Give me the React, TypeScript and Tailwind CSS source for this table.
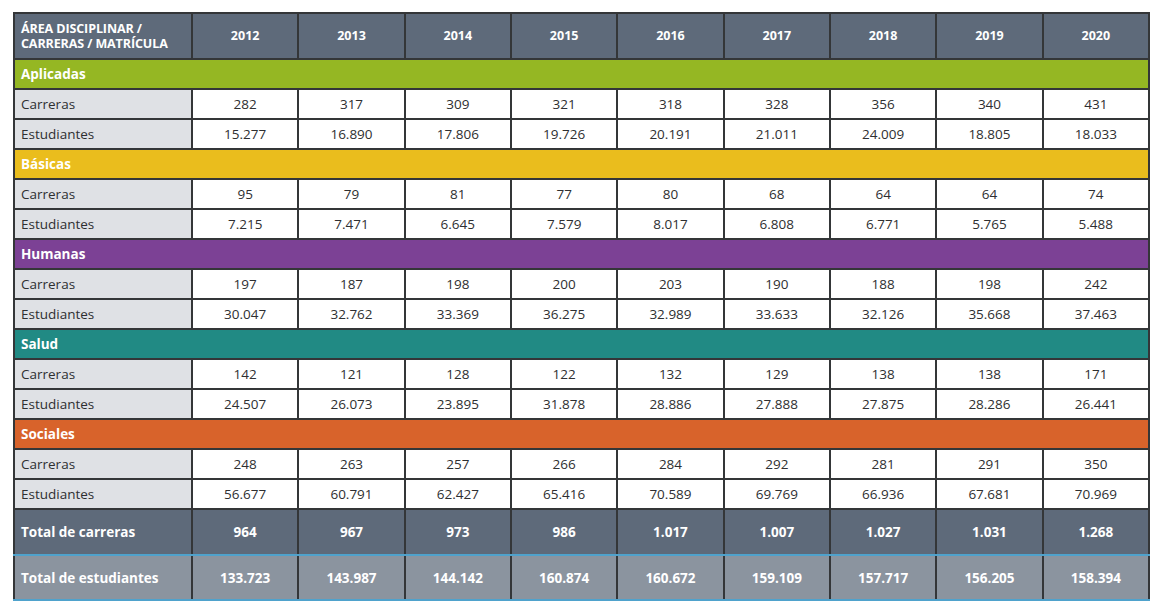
import React from 'react'

const years = ['2012', '2013', '2014', '2015', '2016', '2017', '2018', '2019', '2020']

const areas = [
    {
        name: 'Aplicadas',
        color: 'bg-[#95b723]',
        carreras: ['282', '317', '309', '321', '318', '328', '356', '340', '431'],
        estudiantes: ['15.277', '16.890', '17.806', '19.726', '20.191', '21.011', '24.009', '18.805', '18.033'],
    },
    {
        name: 'Básicas',
        color: 'bg-[#eabd1d]',
        carreras: ['95', '79', '81', '77', '80', '68', '64', '64', '74'],
        estudiantes: ['7.215', '7.471', '6.645', '7.579', '8.017', '6.808', '6.771', '5.765', '5.488'],
    },
    {
        name: 'Humanas',
        color: 'bg-[#7c4195]',
        carreras: ['197', '187', '198', '200', '203', '190', '188', '198', '242'],
        estudiantes: ['30.047', '32.762', '33.369', '36.275', '32.989', '33.633', '32.126', '35.668', '37.463'],
    },
    {
        name: 'Salud',
        color: 'bg-[#218a84]',
        carreras: ['142', '121', '128', '122', '132', '129', '138', '138', '171'],
        estudiantes: ['24.507', '26.073', '23.895', '31.878', '28.886', '27.888', '27.875', '28.286', '26.441'],
    },
    {
        name: 'Sociales',
        color: 'bg-[#d8632b]',
        carreras: ['248', '263', '257', '266', '284', '292', '281', '291', '350'],
        estudiantes: ['56.677', '60.791', '62.427', '65.416', '70.589', '69.769', '66.936', '67.681', '70.969'],
    },
]

const totalCarreras = ['964', '967', '973', '986', '1.017', '1.007', '1.027', '1.031', '1.268']
const totalEstudiantes = ['133.723', '143.987', '144.142', '160.874', '160.672', '159.109', '157.717', '156.205', '158.394']

const cell = 'border-2 border-[#343638]'

function DataRow({ label, values }: { label: string; values: string[] }) {
    return (
        <tr className="h-[30px]">
            <td className={`${cell} bg-[#dfe1e5] pl-[6px] text-left`}>{label}</td>
            {values.map((v, i) => (
                <td key={i} className={`${cell} bg-white text-center`}>{v}</td>
            ))}
        </tr>
    )
}

export default function App() {
    return (
        <div className="min-h-screen w-[1165px] bg-white pt-[12px] pl-[13px]" style={{ fontFamily: '"Open Sans", "Noto Sans", sans-serif' }}>
            <table className="w-[1137px] table-fixed border-collapse text-[13.5px] leading-[18px] text-[#2e2f31]">
                <colgroup>
                    <col className="w-[178px]" />
                    {years.map((y) => (
                        <col key={y} />
                    ))}
                </colgroup>
                <thead>
                    <tr className="h-[46px] bg-[#5e6a7a] text-white">
                        <th className={`${cell} pl-[6px] text-left text-[12.5px] font-bold leading-[15px] tracking-[-0.1px] whitespace-nowrap`}>
                            ÁREA DISCIPLINAR /<br />CARRERAS / MATRÍCULA
                        </th>
                        {years.map((y) => (
                            <th key={y} className={`${cell} text-center text-[12.5px] font-bold`}>{y}</th>
                        ))}
                    </tr>
                </thead>
                <tbody>
                    {areas.map((a) => (
                        <React.Fragment key={a.name}>
                            <tr className={`h-[30px] ${a.color}`}>
                                <td colSpan={10} className={`${cell} pl-[6px] text-left font-bold text-white`}>{a.name}</td>
                            </tr>
                            <DataRow label="Carreras" values={a.carreras} />
                            <DataRow label="Estudiantes" values={a.estudiantes} />
                        </React.Fragment>
                    ))}
                    <tr className="h-[46px] bg-[#5e6a7a] font-bold text-white">
                        <td className="border-2 border-[#343638] border-t-[#4fa2cc] border-b-[#4fa2cc] pl-[6px] text-left">Total de carreras</td>
                        {totalCarreras.map((v, i) => (
                            <td key={i} className="border-2 border-[#343638] border-t-[#4fa2cc] border-b-[#4fa2cc] text-center">{v}</td>
                        ))}
                    </tr>
                    <tr className="h-[45px] bg-[#8b949f] font-bold text-white">
                        <td className="border-2 border-[#343638] border-b-[#4fa2cc] pl-[6px] text-left">Total de estudiantes</td>
                        {totalEstudiantes.map((v, i) => (
                            <td key={i} className="border-2 border-[#343638] border-b-[#4fa2cc] text-center">{v}</td>
                        ))}
                    </tr>
                </tbody>
            </table>
        </div>
    )
}
